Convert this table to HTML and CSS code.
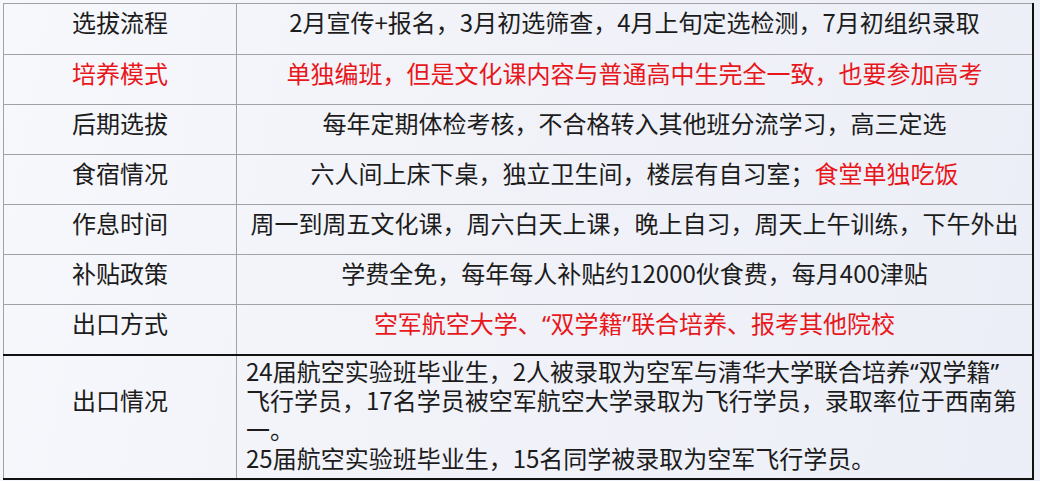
FILE: index.html
```html
<!DOCTYPE html>
<html lang="zh-CN">
<head>
<meta charset="utf-8">
<title>航空实验班</title>
<link rel="stylesheet" href="styles.css">
</head>
<body>
<table class="info">
  <colgroup><col class="c-label"><col class="c-value"></colgroup>
  <tbody>
    <tr><td class="label">选拔流程</td><td class="value">2月宣传+报名，3月初选筛查，4月上旬定选检测，7月初组织录取</td></tr>
    <tr class="hl"><td class="label">培养模式</td><td class="value">单独编班，但是文化课内容与普通高中生完全一致，也要参加高考</td></tr>
    <tr><td class="label">后期选拔</td><td class="value">每年定期体检考核，不合格转入其他班分流学习，高三定选</td></tr>
    <tr><td class="label">食宿情况</td><td class="value">六人间上床下桌，独立卫生间，楼层有自习室；<span class="red">食堂单独吃饭</span></td></tr>
    <tr><td class="label">作息时间</td><td class="value">周一到周五文化课，周六白天上课，晚上自习，周天上午训练，下午外出</td></tr>
    <tr><td class="label">补贴政策</td><td class="value">学费全免，每年每人补贴约12000伙食费，每月400津贴</td></tr>
    <tr><td class="label">出口方式</td><td class="value red">空军航空大学、<span class="q">“</span>双学籍<span class="q">”</span>联合培养、报考其他院校</td></tr>
    <tr class="last"><td class="label">出口情况</td><td class="value text"><div class="ln">24届航空实验班毕业生，2人被录取为空军与清华大学联合培养<span class="q">“</span>双学籍<span class="q">”</span></div><div class="ln">飞行学员，17名学员被空军航空大学录取为飞行学员，录取率位于西南第</div><div class="ln">一。</div><div class="ln">25届航空实验班毕业生，15名同学被录取为空军飞行学员。</div></td></tr>
  </tbody>
</table>
</body>
</html>
```
FILE: styles.css
```css
html, body {
  margin: 0;
  height: 100%;
}
body {
  padding: 3px 0 0 3px;
  box-sizing: border-box;
  overflow: hidden;
  background: linear-gradient(100deg, #f7f8fc 0%, #f2f3f9 40%, #eceef7 100%);
  font-family: "Noto Sans CJK SC", "Noto Sans", sans-serif;
  font-size: 24px;
  color: #1c1c1c;
}
.info {
  border-collapse: collapse;
  width: 1031px;
  table-layout: fixed;
  border-top: 1px solid #111;
  border-left: 1px solid #111;
  border-right: 2px solid #111;
  border-bottom: 2px solid #111;
}
.c-label { width: 233px; }
.info td {
  border: 1px solid #a2a2a6;
  vertical-align: top;
  padding: 4px 0 0 0;
  line-height: 28px;
  box-sizing: border-box;
}
.info tr td { height: 50px; }
.info tr:first-child td { height: 51px; }
.label { text-align: center; }
.value { text-align: center; }
.hl td { color: #e8171b; }
.red { color: #e8171b; }
.q { font-family: "Noto Sans", sans-serif; }
.info tr.last td {
  border-top: 2px solid #111;
  height: 124px;
}
.info tr.last .label { padding-top: 30px; }
.info tr.last .text {
  text-align: left;
  padding: 1px 0 0 9px;
  white-space: nowrap;
}
.ln {
  height: 28px;
  line-height: 28px;
}
.ln + .ln { margin-top: 1px; }
```
